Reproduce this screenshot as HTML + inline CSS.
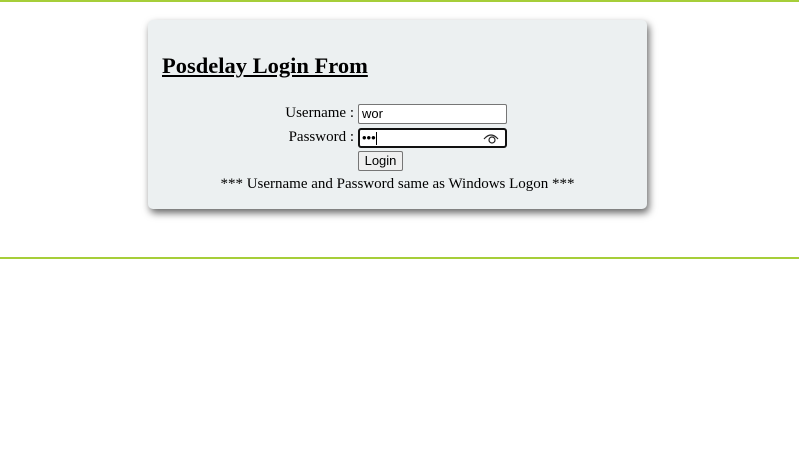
<!DOCTYPE html>
<html><head><meta charset="utf-8"><style>
html,body{margin:0;padding:0;background:#fff;width:799px;height:471px;overflow:hidden;font-family:"Liberation Serif",serif;}
.l1{position:absolute;left:0;top:0;width:799px;height:2px;background:#a6ce39;}
.l2{position:absolute;left:0;top:257px;width:799px;height:2px;background:#a6ce39;}
.card{position:absolute;left:148px;top:20px;width:499px;height:189px;background:#ecf0f1;border-radius:5px;box-shadow:2px 4px 8px rgba(0,0,0,.6);}
h1{position:absolute;left:14px;top:33px;margin:0;font-size:22.5px;font-weight:bold;text-decoration:underline;line-height:26px;}
.lab{position:absolute;font-size:15px;line-height:18px;text-align:right;width:150px;left:56px;}
.inp{position:absolute;left:210px;width:149px;height:18px;border:1px solid #767676;border-radius:2px;background:#fff;font-family:"Liberation Sans",sans-serif;font-size:13px;line-height:18px;box-sizing:border-box;padding-left:3px;}
.btn{position:absolute;left:210px;top:131px;width:45px;height:20px;border:1px solid #767676;border-radius:2px;background:#efefef;font-family:"Liberation Sans",sans-serif;font-size:13px;line-height:18px;text-align:center;box-sizing:border-box;}
.note{position:absolute;left:0;width:499px;top:155px;text-align:center;font-size:15px;line-height:18px;}
</style></head><body>
<div class="l1"></div><div class="l2"></div>
<div class="card">
<h1>Posdelay Login From</h1>
<div class="lab" style="top:84px">Username :</div>
<div class="inp" style="top:84px;height:20px">wor</div>
<div class="lab" style="top:108px">Password :</div>
<div class="inp" style="top:108px;height:20px;border:2px solid #111;border-radius:3px;padding-left:2px;line-height:15px">&#8226;&#8226;&#8226;<span style="display:inline-block;width:1px;height:13px;background:#000;vertical-align:middle"></span>
<svg style="position:absolute;right:6px;top:3px" width="16" height="11" viewBox="0 0 16 11"><path d="M1 6 Q8 -2 15 6" fill="none" stroke="#222" stroke-width="1.2"/><circle cx="9" cy="7" r="3" fill="none" stroke="#222" stroke-width="1.2"/></svg></div>
<div class="btn">Login</div>
<div class="note">*** Username and Password same as Windows Logon ***</div>
</div>
</body></html>
